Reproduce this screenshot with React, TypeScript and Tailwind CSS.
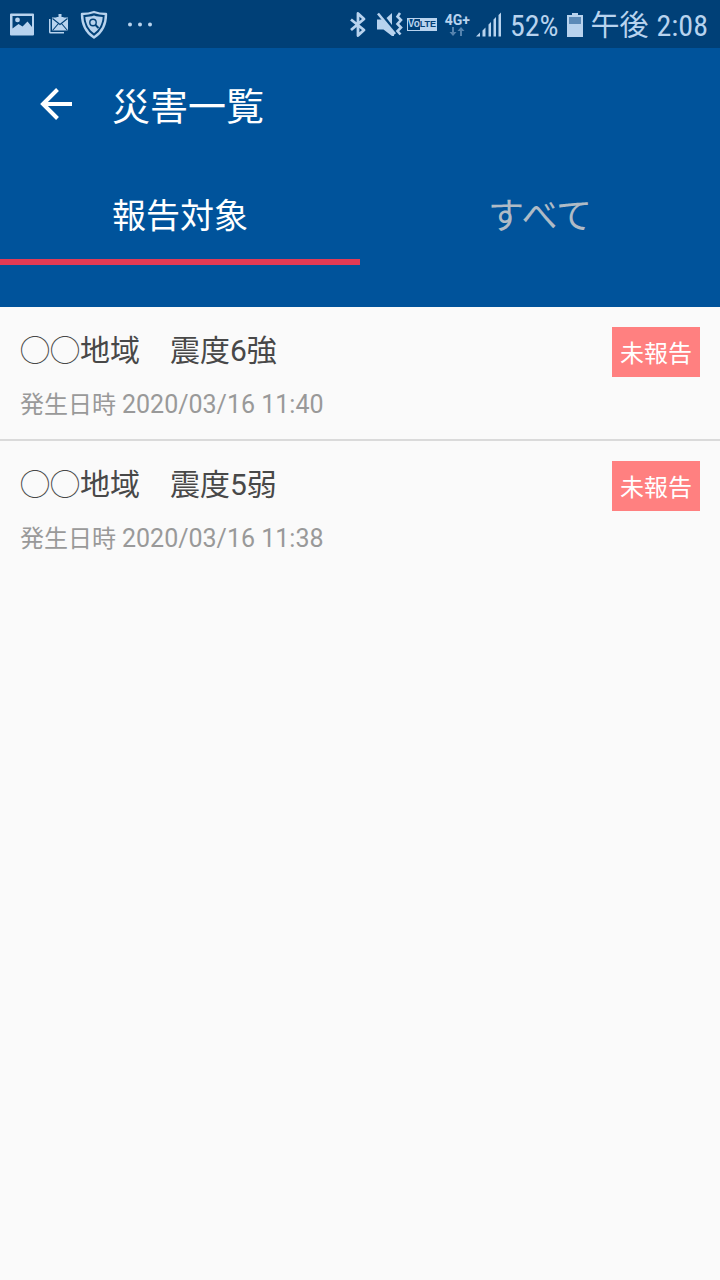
import React, { useState } from 'react';

type Disaster = { id: number; name: string; date: string; status: string };

const disasters: Disaster[] = [
  { id: 1, name: '◯◯地域　震度6強', date: '2020/03/16 11:40', status: '未報告' },
  { id: 2, name: '◯◯地域　震度5弱', date: '2020/03/16 11:38', status: '未報告' },
];

const tabs = ['報告対象', 'すべて'];

function StatusBar() {
  return (
    <div className="flex h-12 items-center justify-between bg-[#004077] pr-3 pl-2 text-[#b8d3ee]">
      <div className="flex items-center">
        <svg width="28" height="28" viewBox="0 0 28 28" fill="currentColor" aria-hidden="true">
          <path fillRule="evenodd" d="M3 3.500h22a1 1 0 0 1 1 1v20a1 1 0 0 1-1 1H3a1 1 0 0 1-1-1v-20a1 1 0 0 1 1-1zM4.500 6v12.500l6-4.500 4 2.500 5-5 4.500 5.500V6zM9.500 7.500a2.400 2.400 0 1 1 0 4.800 2.400 2.400 0 0 1 0-4.800z" />
        </svg>
        <svg className="ml-3" width="22" height="24" viewBox="0 0 22 24" fill="currentColor" aria-hidden="true">
          <path d="M1 7h1.500v13H16v1.500H2.500A1.500 1.500 0 0 1 1 20z" />
          <path d="M4 5.500h16v13H4z" />
          <path d="M10.500 2h3v3H16l-4 4-4-4h2.500z" />
          <path d="M4.500 6.500l7.500 6 7.500-6M4.500 18.500l6-7M19.500 18.500l-6-7" stroke="#004077" strokeWidth="1.100" fill="none" />
        </svg>
        <svg className="ml-2" width="32" height="32" viewBox="0 0 32 32" fill="none" stroke="currentColor" aria-hidden="true">
          <path d="M16 4C12 5.500 8 6 4 6c0 9 2.500 17.500 12 23.500 9.500-6 12-14.500 12-23.500-4 0-8-.5-12-2z" strokeWidth="2.400" strokeLinejoin="round" />
          <path d="M16 7.500c-2.800 1-5.600 1.400-8.700 1.500.5 7.300 3.500 12.500 8.700 16.200 5.200-3.700 8.200-8.900 8.700-16.200C21.600 8.900 18.800 8.500 16 7.500z" fill="currentColor" stroke="none" />
          <circle cx="15" cy="14.500" r="3.200" stroke="#004077" strokeWidth="1.400" />
          <path d="M17.500 17l3 3" stroke="#004077" strokeWidth="2" />
        </svg>
        <svg className="ml-4" width="28" height="6" viewBox="0 0 28 6" fill="currentColor" aria-hidden="true">
          <circle cx="4" cy="3.500" r="2" />
          <circle cx="14" cy="3.500" r="2" />
          <circle cx="24" cy="3.500" r="2" />
        </svg>
      </div>
      <div className="flex items-center">
        <svg width="18" height="28" viewBox="0 0 18 28" fill="none" stroke="currentColor" strokeWidth="2.800" strokeLinejoin="round" aria-hidden="true">
          <path d="M2 9.500L15 20 9 25.500V3.500l6 5.500L2 20" />
        </svg>
        <svg className="ml-2" width="28" height="28" viewBox="0 0 28 28" aria-hidden="true">
          <path d="M2 9.500h5L19 23v3h-2l-8.500-6.500H2z" fill="currentColor" />
          <path d="M11.500 8L17 3v12z" fill="currentColor" />
          <path d="M3 3.500L20 24" stroke="currentColor" strokeWidth="2.600" />
          <path d="M25 3l-2.500 3.500 3.500 3.500-3.500 4 3.500 3.500-3.500 3.500 3 3.500" stroke="currentColor" strokeWidth="2.600" fill="none" />
        </svg>
        <div className="ml-1 flex h-[13px] w-[30px] items-center border border-current font-['Liberation_Sans'] text-[10px] leading-none font-bold">
          <span className="flex h-full flex-1 items-center justify-center">Vo</span>
          <span className="flex h-full items-center justify-center bg-[#b8d3ee] text-[9px] text-[#004077]">LTE</span>
        </div>
        <div className="ml-2 flex flex-col items-center">
          <span className="text-[14px] leading-[14px] font-bold">4G+</span>
          <svg width="16" height="9" viewBox="0 0 16 9" fill="#5583ae" aria-hidden="true">
            <path d="M3 0h2v5h2.500L4 9 .5 5H3zM11 9h2V4h2.500L12 0 8.500 4H11z" />
          </svg>
        </div>
        <svg className="ml-1" width="28" height="26" viewBox="0 0 28 26" fill="currentColor" aria-hidden="true">
          <path d="M2 25.500l4-4v4zM8.500 19.500l3-3v9h-3zM14.500 13.500l2.500-2.500v14.500h-2.500zM19.500 8.500L22 6v19.500h-2.500zM24.500 4L27 1.500v24h-2.500z" />
        </svg>
        <span className="ml-2 pt-1 font-['Roboto_Condensed','Liberation_Sans_Narrow',Roboto,sans-serif] text-[30px] leading-9">52%</span>
        <svg className="ml-2" width="16" height="26" viewBox="0 0 16 26" fill="currentColor" aria-hidden="true">
          <path d="M5 2h6v2h5v22H0V4h5z" />
          <path d="M2 6h12v7H2z" fill="#5c8bb8" />
        </svg>
        <span className="ml-2 flex items-center gap-2 pt-1 font-['Roboto_Condensed','Liberation_Sans_Narrow',Roboto,'Noto_Sans_CJK_JP',sans-serif] text-[30px] leading-9">
          <span className="text-[29px]">午後</span>
          <span>2:08</span>
        </span>
      </div>
    </div>
  );
}

export default function App() {
  const [active, setActive] = useState(0);

  return (
    <div className="min-h-screen bg-[#fafafa] font-[Roboto,'Noto_Sans_CJK_JP',sans-serif]" lang="ja">
      <StatusBar />
      <header className="bg-[#00539b] pb-[42px] text-white">
        <div className="flex h-28 items-center gap-10 px-10">
          <button type="button" aria-label="戻る">
            <svg width="32" height="32" viewBox="0 0 32 32" fill="none" stroke="currentColor" strokeWidth="4" aria-hidden="true">
              <path d="M17.500 1.500L3 16l14.500 14.500M3 16h29" />
            </svg>
          </button>
          <h1 className="pt-[6px] text-[38px] leading-[56px]">災害一覧</h1>
        </div>
        <div role="tablist" className="grid grid-cols-2">
          {tabs.map((tab, i) => (
            <button
              key={tab}
              type="button"
              role="tab"
              aria-selected={active === i}
              onClick={() => setActive(i)}
              className={
                active === i
                  ? 'h-[105px] border-b-[6px] border-[#e23a55] pt-[14px] text-[34px] text-white'
                  : 'h-[105px] border-b-[6px] border-transparent pt-[14px] text-[36px] text-[#afbbc6]'
              }
            >
              {tab}
            </button>
          ))}
        </div>
      </header>
      <main>
        <ul className="divide-y-2 divide-[#dadada]">
          {disasters.map((d) => (
            <li key={d.id} className="flex items-start justify-between px-5 pt-5 pb-[18px]">
              <div>
                <h2 className="text-[30px] leading-[48px] text-[#484848]">{d.name}</h2>
                <p className="mt-[14px] flex gap-[6px] leading-8 text-[#999999]">
                  <span className="text-[24px]">発生日時</span>
                  <time className="text-[25px]">{d.date}</time>
                </p>
              </div>
              <span className="bg-[#ff8080] px-2 pt-1 text-[24px] leading-[46px] text-white">{d.status}</span>
            </li>
          ))}
        </ul>
      </main>
    </div>
  );
}
